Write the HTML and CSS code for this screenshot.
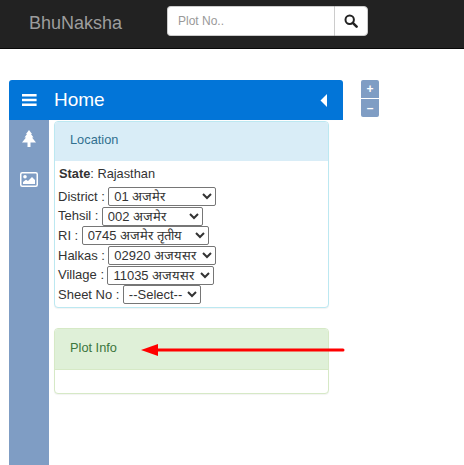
FILE: index.html
```html
<!DOCTYPE html>
<html lang="en">
<head>
<meta charset="utf-8">
<title>BhuNaksha</title>
<link rel="stylesheet" href="styles.css">
</head>
<body>
<nav class="navbar">
  <a class="brand">BhuNaksha</a>
  <form class="search">
    <input class="search-input" type="text" placeholder="Plot No..">
    <button class="search-btn" type="button" aria-label="Search">
      <svg width="14" height="14" viewBox="0 0 14 14"><circle cx="5.7" cy="5.7" r="4.2" fill="none" stroke="#222" stroke-width="2"/><path d="M8.8 8.8 L12.6 12.6" stroke="#222" stroke-width="2.6" stroke-linecap="round"/></svg>
    </button>
  </form>
</nav>
<main class="page">
  <section class="sidebar">
    <header class="side-head">
      <svg class="menu-icon" width="15" height="12" viewBox="0 0 15 12"><path d="M0 0h14.6v2.6H0zM0 4.7h14.6v2.6H0zM0 9.4h14.6V12H0z" fill="#fff"/></svg>
      <h1 class="side-title">Home</h1>
      <svg class="collapse-icon" width="7" height="13" viewBox="0 0 7 13"><path d="M7 0v13L0.5 6.5z" fill="#fff"/></svg>
    </header>
    <div class="side-body">
      <div class="rail">
        <svg class="rail-icon" width="14" height="17" viewBox="0 0 14 17"><path d="M7 0 L10 4 H9 L11.5 7.5 H10 L14 12.5 H8.5 V17 H5.5 V12.5 H0 L4 7.5 H2.5 L5 4 H4z" fill="#fff"/></svg>
        <svg class="rail-icon" width="18" height="15" viewBox="0 0 18 15"><rect x="0.75" y="0.75" width="16.5" height="13.5" rx="1.5" fill="none" stroke="#fff" stroke-width="1.5"/><circle cx="5" cy="4.8" r="1.8" fill="#fff"/><path d="M3 12 L3 10 L6 7.8 L8 9 L12 5 L15 8 V12z" fill="#fff"/></svg>
      </div>
      <div class="panels">
        <div class="panel panel-info">
          <div class="panel-head">Location</div>
          <div class="panel-body">
            <div class="state"><b>State</b>: Rajasthan</div>
            <div class="field">District : <select class="sel sel-district"><option>01 अजमेर</option></select></div>
            <div class="field">Tehsil : <select class="sel sel-tehsil"><option>002 अजमेर</option></select></div>
            <div class="field">RI : <select class="sel sel-ri"><option>0745 अजमेर तृतीय</option></select></div>
            <div class="field">Halkas : <select class="sel sel-halkas"><option>02920 अजयसर</option></select></div>
            <div class="field">Village : <select class="sel sel-village"><option>11035 अजयसर</option></select></div>
            <div class="field">Sheet No : <select class="sel sel-sheet"><option>--Select--</option></select></div>
          </div>
        </div>
        <div class="panel panel-success">
          <div class="panel-head">Plot Info</div>
          <div class="panel-body panel-empty"></div>
        </div>
      </div>
    </div>
  </section>
  <div class="zoom-ctl">
    <button class="zoom-btn" type="button">+</button>
    <button class="zoom-btn" type="button">–</button>
  </div>
  <svg class="arrow" width="204" height="14" viewBox="0 0 204 14"><path d="M202 7 H16" stroke="#f00" stroke-width="3" stroke-linecap="round"/><path d="M0 7 L17 1 V13z" fill="#f00"/></svg>
</main>
</body>
</html>
```
FILE: styles.css
```css
* { box-sizing: border-box; }
html, body { margin: 0; height: 465px; overflow: hidden; background: #fff; }
body { font-family: "Liberation Sans", "Noto Sans", sans-serif; font-size: 14px; color: #333; }

.navbar {
  height: 49px;
  background: #222;
  border-bottom: 1px solid #080808;
  display: flex;
  padding-left: 29px;
}
.brand { color: #9d9d9d; font-size: 18px; line-height: 20px; padding-top: 13px; width: 138px; }
.search { display: flex; height: 30px; margin-top: 6px; }
.search-input {
  width: 167px; height: 30px; padding: 0 10px;
  border: 1px solid #ccc; border-right: 0; border-radius: 4px 0 0 4px;
  font: 12px "Liberation Sans", sans-serif; color: #555; outline: 0;
}
.search-input::placeholder { color: #999; opacity: 1; }
.search-btn {
  width: 34px; height: 30px; padding: 0; background: #fff;
  border: 1px solid #ccc; border-radius: 0 4px 4px 0;
  display: flex; align-items: center; justify-content: center;
}

.page { position: relative; padding: 31px 0 0 9px; }
.sidebar { width: 334px; height: 385px; display: flex; flex-direction: column; }
.side-head {
  height: 40px; flex: none; background: #0275d8; color: #fff;
  border-radius: 3px 3px 0 0;
  display: flex; align-items: center; padding: 0 16px 0 13px;
}
.menu-icon { flex: none; }
.side-title { margin: 0 0 0 17px; font-size: 19px; font-weight: 400; flex: 1; }
.collapse-icon { flex: none; }
.side-body { flex: 1; display: flex; min-height: 0; }
.rail {
  width: 40px; background: #7f9dc4;
  display: flex; flex-direction: column; align-items: center;
  gap: 25px; padding-top: 10px;
}
.rail-icon { flex: none; }
.panels { width: 275px; margin-left: 5px; padding-top: 1px; }
.panel { border: 1px solid; border-radius: 4px; background: #fff; box-shadow: 0 1px 1px rgba(0,0,0,.05); overflow: hidden; }
.panel-head { height: 39px; padding: 9px 15px; font-size: 12.8px; line-height: 17px; }
.panel-info { border-color: #bce8f1; height: 187px; margin-bottom: 20px; }
.panel-info .panel-head { background: #d9edf7; color: #31708f; }
.panel-success { border-color: #d6e9c6; height: 66px; }
.panel-success .panel-head { background: #dff0d8; color: #3c763d; border-bottom: 1px solid #d6e9c6; height: 41px; padding-top: 10px; }
.panel-body { padding: 4px 4px 0; font-size: 12.8px; }
.panel-empty { padding: 0; }
.state { line-height: 17px; margin-bottom: 5px; }
.field { height: 19.6px; white-space: nowrap; margin-left: -1px; line-height: 18px; font-size: 13px; display: flex; align-items: center; gap: 3.4px; }
.sel {
  height: 19px; padding: 0 0 0 1px; font: 13px "Liberation Sans", sans-serif; color: #333;
  background: #fff; border: 1px solid #767676; border-radius: 2px;
}
.sel-district { width: 108px; }
.sel-tehsil { width: 101px; }
.sel-ri { width: 127px; }
.sel-halkas { width: 108px; }
.sel-village { width: 107px; }
.sel-sheet { width: 78px; }

.zoom-ctl { position: absolute; left: 361px; top: 31px; width: 18px; display: flex; flex-direction: column; gap: 1px; }
.zoom-btn {
  width: 18px; height: 18px; padding: 0; border: 0;
  background: #7f9dc4; color: #fff; font: bold 12px/16px "Liberation Sans", sans-serif;
}
.zoom-btn:first-child { border-radius: 2px 2px 0 0; }
.zoom-btn:last-child { border-radius: 0 0 2px 2px; }
.arrow { position: absolute; left: 141px; top: 294px; }
```
